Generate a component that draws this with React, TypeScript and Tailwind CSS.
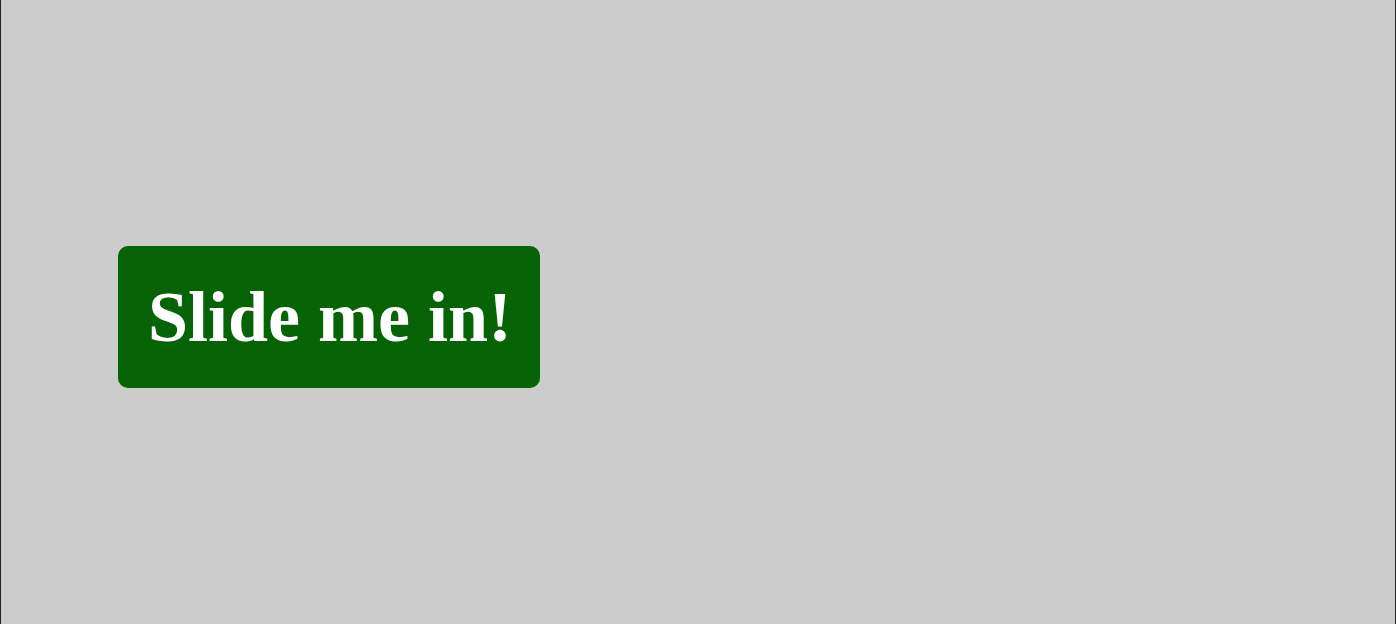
export default function App() {
  return (
    <div className="h-[624px] w-full bg-[#cccccc] border-x border-[#222222] flex items-center pl-[117px] pt-[10px]">
      <div className="rounded-[10px] bg-[#066306] pl-[30px] pr-[28px] py-[29px] text-[72px] leading-[84px] font-bold text-white font-['Liberation_Serif',serif]">
        Slide me in!
      </div>
    </div>
  );
}
